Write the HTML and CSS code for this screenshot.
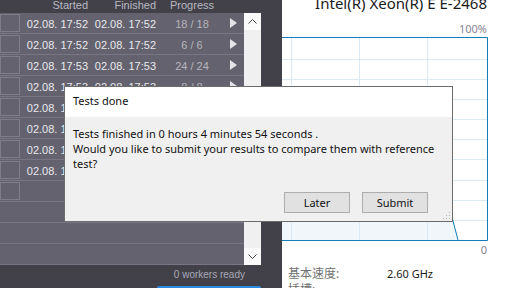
FILE: index.html
```html
<!DOCTYPE html>
<html lang="en">
<head>
    <meta charset="UTF-8">
    <meta name="viewport" content="width=device-width, initial-scale=1.0">
    <title>Tests done</title>
    <link rel="stylesheet" href="styles.css">
</head>
<body>
    <div class="app">
        <div class="runner">
            <div class="thead">
                <span class="cell box-col"></span>
                <span class="cell started">Started</span>
                <span class="cell finished">Finished</span>
                <span class="cell progress">Progress</span>
                <span class="cell play"></span>
            </div>
            <div class="tbody">
                <div class="rows">
                    <div class="row">
                        <span class="cell box-col"><i class="box"></i></span>
                        <span class="cell started">02.08. 17:52</span>
                        <span class="cell finished">02.08. 17:52</span>
                        <span class="cell progress">18 / 18</span>
                        <span class="cell play"><b class="tri"></b></span>
                    </div>
                    <div class="row">
                        <span class="cell box-col"><i class="box"></i></span>
                        <span class="cell started">02.08. 17:52</span>
                        <span class="cell finished">02.08. 17:52</span>
                        <span class="cell progress">6 / 6</span>
                        <span class="cell play"><b class="tri"></b></span>
                    </div>
                    <div class="row">
                        <span class="cell box-col"><i class="box"></i></span>
                        <span class="cell started">02.08. 17:53</span>
                        <span class="cell finished">02.08. 17:53</span>
                        <span class="cell progress">24 / 24</span>
                        <span class="cell play"><b class="tri"></b></span>
                    </div>
                    <div class="row">
                        <span class="cell box-col"><i class="box"></i></span>
                        <span class="cell started">02.08. 17:53</span>
                        <span class="cell finished">02.08. 17:53</span>
                        <span class="cell progress">8 / 8</span>
                        <span class="cell play"><b class="tri"></b></span>
                    </div>
                    <div class="row">
                        <span class="cell box-col"><i class="box"></i></span>
                        <span class="cell started">02.08. 17:53</span>
                        <span class="cell finished">02.08. 17:54</span>
                        <span class="cell progress">12 / 12</span>
                        <span class="cell play"><b class="tri"></b></span>
                    </div>
                    <div class="row">
                        <span class="cell box-col"><i class="box"></i></span>
                        <span class="cell started">02.08. 17:54</span>
                        <span class="cell finished">02.08. 17:55</span>
                        <span class="cell progress">16 / 16</span>
                        <span class="cell play"><b class="tri"></b></span>
                    </div>
                    <div class="row">
                        <span class="cell box-col"><i class="box"></i></span>
                        <span class="cell started">02.08. 17:55</span>
                        <span class="cell finished">02.08. 17:56</span>
                        <span class="cell progress">10 / 10</span>
                        <span class="cell play"><b class="tri"></b></span>
                    </div>
                    <div class="row">
                        <span class="cell box-col"><i class="box"></i></span>
                        <span class="cell started">02.08. 17:56</span>
                        <span class="cell finished">02.08. 17:57</span>
                        <span class="cell progress">4 / 4</span>
                        <span class="cell play"><b class="tri"></b></span>
                    </div>
                    <div class="row">
                        <span class="cell box-col"><i class="box"></i></span>
                    </div>
                    <div class="row"></div>
                    <div class="row"></div>
                    <div class="row"></div>
                </div>
                <div class="scroll">
                    <div class="scroll-btn">
                        <svg width="9" height="5" viewBox="0 0 9 5"><polyline points="0.5,4.5 4.5,0.5 8.5,4.5" fill="none" stroke="#444" stroke-width="1"/></svg>
                    </div>
                    <div class="scroll-btn">
                        <svg width="9" height="5" viewBox="0 0 9 5"><polyline points="0.5,0.5 4.5,4.5 8.5,0.5" fill="none" stroke="#444" stroke-width="1"/></svg>
                    </div>
                </div>
            </div>
            <div class="status">
                <div class="workers">0 workers ready</div>
                <div class="run-btn"></div>
            </div>
        </div>

        <div class="cpu">
            <div class="cpu-name">Intel(R) Xeon(R) E E-2468</div>
            <div class="axis">100%</div>
            <svg class="chart" width="206" height="204" viewBox="0 0 206 204">
                <polygon points="0,165 166,165 176,203 0,203" fill="#f1f6fa"/>
                <g stroke="#d9eaf4" stroke-width="1">
                    <line x1="9.5" y1="0" x2="9.5" y2="204"/>
                    <line x1="77.5" y1="0" x2="77.5" y2="204"/>
                    <line x1="145.5" y1="0" x2="145.5" y2="204"/>
                    <line x1="0" y1="22.5" x2="206" y2="22.5"/>
                    <line x1="0" y1="42.5" x2="206" y2="42.5"/>
                    <line x1="0" y1="62.5" x2="206" y2="62.5"/>
                    <line x1="0" y1="82.5" x2="206" y2="82.5"/>
                    <line x1="0" y1="102.5" x2="206" y2="102.5"/>
                    <line x1="0" y1="122.5" x2="206" y2="122.5"/>
                    <line x1="0" y1="143.5" x2="206" y2="143.5"/>
                    <line x1="0" y1="163.5" x2="206" y2="163.5"/>
                    <line x1="0" y1="183.5" x2="206" y2="183.5"/>
                </g>
                <polyline points="166,165 176,203" fill="none" stroke="#117dbb" stroke-width="1"/>
                <polyline points="0,0.5 205.5,0.5 205.5,203.5 0,203.5" fill="none" stroke="#117dbb" stroke-width="1"/>
            </svg>
            <div class="axis">0</div>
            <div class="specs">
                <span class="spec-label">基本速度:</span>
                <span class="spec-value">2.60 GHz</span>
                <span class="spec-label">插槽:</span>
                <span class="spec-value"></span>
            </div>
        </div>

        <div class="dialog">
            <div class="dialog-title">Tests done</div>
            <div class="dialog-body">
                Tests finished in 0 hours 4 minutes 54 seconds .<br>
                Would you like to submit your results to compare them with reference test?
            </div>
            <div class="dialog-actions">
                <button class="dialog-btn">Later</button>
                <button class="dialog-btn">Submit</button>
            </div>
            <svg class="grip" width="9" height="9" viewBox="0 0 9 9">
                <g fill="#b4b4b4">
                    <rect x="7" y="1" width="1" height="1"/>
                    <rect x="4" y="4" width="1" height="1"/>
                    <rect x="7" y="4" width="1" height="1"/>
                    <rect x="1" y="7" width="1" height="1"/>
                    <rect x="4" y="7" width="1" height="1"/>
                    <rect x="7" y="7" width="1" height="1"/>
                </g>
            </svg>
        </div>
    </div>
</body>
</html>
```

FILE: styles.css
```css
* {
    margin: 0;
    padding: 0;
    box-sizing: border-box;
}
body {
    width: 512px;
    height: 288px;
    overflow: hidden;
    background: #fff;
    font-family: "Noto Sans", "Noto Sans CJK SC", sans-serif;
}

.app {
    position: relative;
    display: flex;
    height: 288px;
}

/* left: test runner list */
.runner {
    width: 282px;
    flex: none;
    display: flex;
    flex-direction: column;
    overflow: hidden;
    background: #424149;
    font-family: "Liberation Sans", sans-serif;
    font-size: 11px;
    padding-right: 21px;
}
.runner > * {
    flex: none;
}
.thead {
    display: flex;
    height: 13px;
    line-height: 10px;
    color: #b9b8c2;
}
.tbody {
    display: flex;
}
.rows {
    width: 244px;
}
.row {
    display: flex;
    align-items: flex-start;
    height: 21px;
    line-height: 22px;
    background: #64626e;
    border-bottom: 1px solid #787684;
    color: #e9e9ef;
    white-space: nowrap;
}
.cell {
    flex: none;
}
.box-col {
    width: 20px;
}
.box {
    display: block;
    width: 20px;
    height: 18px;
    margin-top: 1px;
    border: 1px solid #7f7d8a;
}
.started,
.finished {
    width: 68px;
    text-align: right;
}
.progress {
    width: 72px;
    text-align: center;
}
.row .progress {
    color: #b6b5bd;
}
.play {
    width: 16px;
}
.tri {
    display: block;
    width: 0;
    height: 0;
    margin: 5px 0 0 2px;
    border-left: 7px solid #e4e4e8;
    border-top: 5.5px solid transparent;
    border-bottom: 5.5px solid transparent;
}
.scroll {
    width: 17px;
    display: flex;
    flex-direction: column;
    justify-content: space-between;
    background: #f0f0f0;
}
.scroll-btn {
    height: 17px;
    display: flex;
    align-items: center;
    justify-content: center;
    background: #fafafa;
}
.status {
    padding-top: 2px;
    display: flex;
    flex-direction: column;
}
.workers {
    padding-right: 16px;
    text-align: right;
    line-height: 16px;
    font-size: 10px;
    color: #a9a8b8;
}
.run-btn {
    align-self: flex-end;
    width: 104px;
    height: 2px;
    margin-top: 3px;
    border-radius: 2px 2px 0 0;
    background: #2d8ae3;
}

/* right: cpu panel */
.cpu {
    flex: 1;
    display: flex;
    flex-direction: column;
    overflow: hidden;
}
.cpu > * {
    flex: none;
}
.cpu-name {
    height: 16px;
    margin-top: -5px;
    padding-right: 25px;
    line-height: 16px;
    font-size: 15px;
    color: #1a1a1a;
    text-align: right;
    white-space: nowrap;
}
.axis {
    height: 13px;
    line-height: 13px;
    padding-right: 25px;
    font-size: 11px;
    color: #878391;
    text-align: right;
}
.cpu-name + .axis {
    margin-top: 11px;
}
.chart {
    display: block;
    margin-top: 2px;
}
.chart + .axis {
    margin-top: 2px;
}
.specs {
    display: grid;
    grid-template-columns: 99px auto;
    align-items: baseline;
    padding-left: 6px;
    margin-top: 10px;
    line-height: 16px;
}
.spec-label {
    font-size: 12px;
    color: #707070;
}
.spec-value {
    font-size: 11px;
    color: #1a1a1a;
}

/* modal dialog */
.dialog {
    position: absolute;
    left: 64px;
    top: 86px;
    width: 389px;
    height: 136px;
    display: flex;
    flex-direction: column;
    border: 1px solid #6b6b6b;
    background: #f0f0f0;
    font-size: 11px;
    color: #111;
}
.dialog-title {
    height: 30px;
    line-height: 28px;
    padding-left: 8px;
    background: #fff;
}
.dialog-body {
    flex: 1;
    padding: 9px 8px 0;
    line-height: 15px;
}
.dialog-actions {
    display: flex;
    justify-content: flex-end;
    gap: 12px;
    padding: 0 24px 8px;
}
.dialog-btn {
    width: 66px;
    height: 21px;
    border: 1px solid #adadad;
    background: #e1e1e1;
    font-family: inherit;
    font-size: 11px;
    color: #111;
}
.grip {
    position: absolute;
    right: 1px;
    bottom: 1px;
}
```
